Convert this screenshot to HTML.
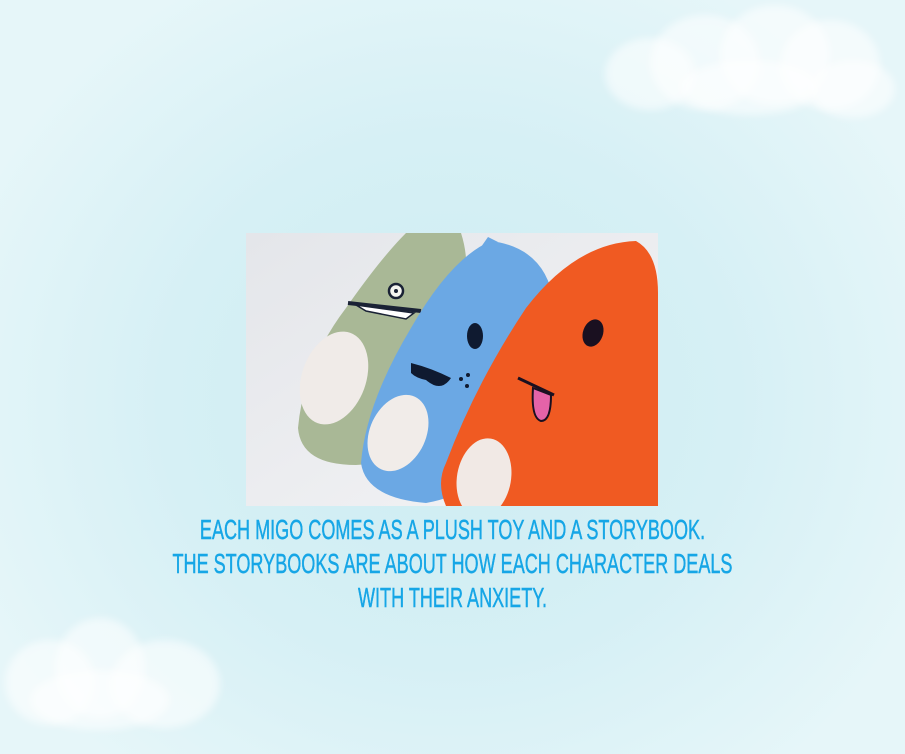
<!DOCTYPE html>
<html><head><meta charset="utf-8"><style>
html,body{margin:0;padding:0}
body{width:905px;height:754px;overflow:hidden;position:relative;
background:radial-gradient(ellipse 520px 480px at 450px 400px,#cdecf2 0%,#d6f0f5 55%,#e6f6f9 100%);}
.cloud{position:absolute;border-radius:50%;background:rgba(255,255,255,0.55);filter:blur(4px)}
#photo{position:absolute;left:246px;top:233px;width:412px;height:273px}
.t{position:absolute;left:0;width:905px;text-align:center;color:#16a6e6;
font-family:"Liberation Sans",sans-serif;font-size:28px;line-height:34px;top:513px;-webkit-text-stroke:0.5px #16a6e6}
.t div{display:block;transform:scaleX(0.645);transform-origin:center;white-space:nowrap}
</style></head><body>
<div class="cloud" style="left:605px;top:38px;width:90px;height:72px"></div>
<div class="cloud" style="left:650px;top:15px;width:110px;height:95px"></div>
<div class="cloud" style="left:720px;top:5px;width:110px;height:100px"></div>
<div class="cloud" style="left:780px;top:20px;width:100px;height:90px"></div>
<div class="cloud" style="left:810px;top:60px;width:85px;height:58px"></div>
<div class="cloud" style="left:680px;top:60px;width:140px;height:55px"></div>
<div class="cloud" style="left:5px;top:640px;width:90px;height:85px"></div>
<div class="cloud" style="left:55px;top:618px;width:90px;height:100px"></div>
<div class="cloud" style="left:110px;top:640px;width:110px;height:88px"></div>
<div class="cloud" style="left:30px;top:670px;width:140px;height:60px"></div>
<svg id="photo" viewBox="0 0 412 273">
<defs><linearGradient id="bg" x1="0" y1="0" x2="1" y2="1"><stop offset="0" stop-color="#e4e6ea"/><stop offset="1" stop-color="#f4f4f6"/></linearGradient></defs>
<rect width="412" height="273" fill="url(#bg)"/>
<path d="M160 0 L215 0 Q228 40 210 90 L180 170 Q150 232 110 232 Q55 232 52 195 Q58 130 100 75 Q135 25 160 0Z" fill="#a9b896"/>
<ellipse cx="88" cy="145" rx="32" ry="48" fill="#f0ebe8" transform="rotate(20 88 145)"/>
<circle cx="150" cy="58" r="7" fill="#f5f5f0" stroke="#1a2235" stroke-width="2.5"/><circle cx="150" cy="58" r="2" fill="#1a2235"/>
<path d="M102 70 L175 78" stroke="#1a2235" stroke-width="4"/><path d="M110 72 L168 80 L160 86 L120 78Z" fill="#fff" stroke="#1a2235" stroke-width="1.5"/>
<path d="M245 8 Q300 15 308 70 Q305 140 270 200 Q240 260 180 270 Q120 265 115 230 Q120 170 165 95 Q205 25 245 8Z" fill="#6ba8e4"/>
<path d="M235 14 L242 4 L252 9 Z" fill="#6ba8e4"/>
<ellipse cx="152" cy="200" rx="28" ry="40" fill="#f1ece9" transform="rotate(25 152 200)"/>
<ellipse cx="229" cy="103" rx="8" ry="13" fill="#0f1a30"/>
<path d="M165 130 Q185 135 205 145 Q195 160 180 147 Q170 145 165 140Z" fill="#0f1a30"/>
<circle cx="215" cy="146" r="2" fill="#0f1a30"/><circle cx="222" cy="142" r="2" fill="#0f1a30"/><circle cx="221" cy="153" r="2" fill="#0f1a30"/>
<path d="M390 8 Q412 20 412 60 L412 273 L200 273 Q190 250 200 230 Q230 150 280 75 Q330 10 390 8Z" fill="#f05a22"/>
<ellipse cx="238" cy="245" rx="27" ry="40" fill="#f1e9e5" transform="rotate(10 238 245)"/>
<ellipse cx="347" cy="100" rx="10" ry="14" fill="#1a1020" transform="rotate(20 347 100)"/>
<path d="M272 145 L308 162" stroke="#1a1020" stroke-width="3"/>
<path d="M287 155 Q285 185 295 188 Q305 188 305 162Z" fill="#e463a8" stroke="#1a1020" stroke-width="2"/>
</svg>
<div class="t"><div>EACH MIGO COMES AS A PLUSH TOY AND A STORYBOOK.</div><div>THE STORYBOOKS ARE ABOUT HOW EACH CHARACTER DEALS</div><div>WITH THEIR ANXIETY.</div></div>
</body></html>
